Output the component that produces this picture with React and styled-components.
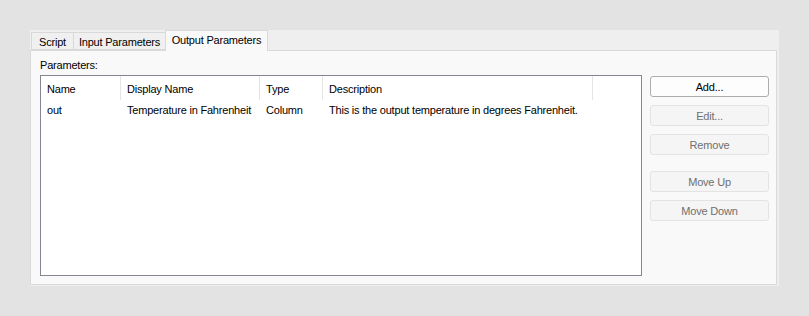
import React from "react";
import styled, { createGlobalStyle } from "styled-components";

const Global = createGlobalStyle`
  html, body { margin: 0; padding: 0; background: #e3e3e3; }
  body {
    font-family: "Liberation Sans", Arial, sans-serif;
    font-size: 11px;
    letter-spacing: -0.2px;
    color: #000;
  }
  * { box-sizing: border-box; }
`;

const Page = styled.div`
  padding: 30px 0 0 30px;
`;

const TabControl = styled.div`
  width: 749px;
  background: #efefef;
  padding: 0 2px 1px 0;
`;

const TabStrip = styled.div`
  display: flex;
  align-items: flex-end;
  height: 20px;
  padding-left: 1px;
  position: relative;
  z-index: 1;
`;

const Tab = styled.div`
  width: ${(p) => p.$w}px;
  height: ${(p) => (p.$active ? 21 : 18)}px;
  margin-bottom: ${(p) => (p.$active ? -1 : 0)}px;
  margin-left: -1px;
  &:first-child { margin-left: 0; }
  border: 1px solid #d9d9d9;
  border-bottom: ${(p) => (p.$active ? "none" : "1px solid #d9d9d9")};
  background: ${(p) => (p.$active ? "#f9f9f9" : "#f0f0f0")};
  display: flex;
  align-items: center;
  justify-content: center;
  padding-top: ${(p) => (p.$active ? 0 : 1)}px;
  padding-bottom: ${(p) => (p.$active ? 3 : 0)}px;
  white-space: nowrap;
  position: relative;
  z-index: ${(p) => (p.$active ? 2 : 1)};
`;

const Panel = styled.div`
  border: 1px solid #d9d9d9;
  background: #f9f9f9;
  height: 235px;
  padding: 7px 7px 8px 9px;
  display: flex;
  gap: 8px;
`;

const LeftCol = styled.div`
  display: flex;
  flex-direction: column;
  width: 602px;
`;

const Label = styled.div`
  height: 15px;
  line-height: 15px;
  margin-bottom: 2px;
`;

const ListView = styled.div`
  height: 201px;
  border: 1px solid #828790;
  background: #fff;
`;

const Row = styled.div`
  display: grid;
  grid-template-columns: 80px 139px 63px 270px;
  height: ${(p) => (p.$header ? 24 : 19)}px;
`;

const Cell = styled.div`
  display: flex;
  align-items: center;
  padding-left: 6px;
  padding-top: ${(p) => (p.$header ? 1 : 0)}px;
  white-space: nowrap;
  overflow: hidden;
  border-right: 1px solid ${(p) => (p.$header ? "#e5e5e5" : "transparent")};
`;

const ButtonCol = styled.div`
  display: flex;
  flex-direction: column;
  width: 119px;
  padding-top: 18px;
  gap: 8px;
`;

const Button = styled.div`
  height: 21px;
  border-radius: 3px;
  display: flex;
  align-items: center;
  justify-content: center;
  margin-top: ${(p) => (p.$spaced ? 8 : 0)}px;
  border: 1px solid ${(p) => (p.$disabled ? "#e3e3e3" : "#adadad")};
  background: ${(p) => (p.$disabled ? "#f5f5f5" : "#fdfdfd")};
  color: ${(p) => (p.$disabled ? "#6f6f6f" : "#000")};
`;

const columns = ["Name", "Display Name", "Type", "Description"];
const rows = [
  ["out", "Temperature in Fahrenheit", "Column", "This is the output temperature in degrees Fahrenheit."],
];

export default function App() {
  return (
    <Page>
      <Global />
      <TabControl>
        <TabStrip>
          <Tab $w={43}>Script</Tab>
          <Tab $w={93}>Input Parameters</Tab>
          <Tab $w={103} $active>Output Parameters</Tab>
        </TabStrip>
        <Panel>
          <LeftCol>
            <Label>Parameters:</Label>
            <ListView>
              <Row $header>
                {columns.map((c) => (
                  <Cell $header key={c}>{c}</Cell>
                ))}
              </Row>
              {rows.map((r, i) => (
                <Row key={i}>
                  {r.map((v, j) => (
                    <Cell key={j}>{v}</Cell>
                  ))}
                </Row>
              ))}
            </ListView>
          </LeftCol>
          <ButtonCol>
            <Button>Add...</Button>
            <Button $disabled>Edit...</Button>
            <Button $disabled>Remove</Button>
            <Button $disabled $spaced>Move Up</Button>
            <Button $disabled>Move Down</Button>
          </ButtonCol>
        </Panel>
      </TabControl>
    </Page>
  );
}
